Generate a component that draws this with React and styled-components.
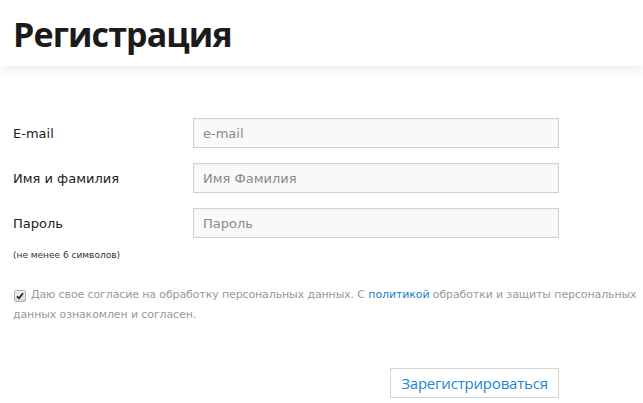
import styled, { createGlobalStyle } from 'styled-components'

const GlobalStyle = createGlobalStyle`
  html, body {
    margin: 0;
    padding: 0;
    background: #ffffff;
  }
  body {
    font-family: "DejaVu Sans", Verdana, sans-serif;
    color: #222;
  }
`

const Header = styled.header`
  height: 66px;
  background: #fff;
  box-shadow: 0 2px 12px rgba(0, 0, 0, 0.09);
  position: relative;
  z-index: 1;
`

const Title = styled.h1`
  margin: 0;
  padding: 11px 0 0 13px;
  font-family: "Open Sans", "Noto Sans", sans-serif;
  font-weight: 700;
  font-size: 34px;
  line-height: 46px;
  color: #1b1b1b;
  letter-spacing: -0.9px;
`

const Form = styled.form`
  padding: 52px 0 0 13px;
`

const Row = styled.div`
  display: flex;
  align-items: center;
  height: 30px;
  margin-bottom: 15px;
`

const Label = styled.label`
  width: 180px;
  font-size: 13px;
  color: #222;
`

const Input = styled.input`
  box-sizing: border-box;
  width: 366px;
  height: 30px;
  padding: 0 9px;
  border: 1px solid #d0d0d0;
  background: #f9f9f9;
  box-shadow: inset 0 1px 2px rgba(0, 0, 0, 0.04);
  font-family: "DejaVu Sans", Verdana, sans-serif;
  font-size: 13px;
  color: #333;
  outline: none;
  &::placeholder {
    color: #8a8a8a;
  }
`

const Hint = styled.div`
  margin-top: -3px;
  font-size: 9px;
  color: #333;
`

const Agreement = styled.div`
  margin-top: 25px;
  font-size: 11px;
  line-height: 20px;
  color: #999;
  letter-spacing: -0.12px;
`

const CheckBox = styled.span`
  display: inline-flex;
  align-items: center;
  justify-content: center;
  box-sizing: border-box;
  width: 12px;
  height: 12px;
  margin: 0 5px 0 1px;
  vertical-align: -2px;
  border: 1px solid #b3b3b3;
  border-radius: 2px;
  background: linear-gradient(#f0f0f0, #d8d8d8);
`

const PolicyLink = styled.a`
  color: #1a7fc2;
  text-decoration: none;
`

const Actions = styled.div`
  display: flex;
  justify-content: flex-start;
  padding-left: 377px;
  margin-top: 43px;
`

const Submit = styled.button`
  box-sizing: border-box;
  width: 169px;
  height: 30px;
  border: 1px solid #d4d4d4;
  background: #fff;
  color: #1e86cf;
  font-family: "Open Sans", "Noto Sans", sans-serif;
  font-size: 15px;
  letter-spacing: -0.2px;
  cursor: pointer;
`

export default function App() {
  return (
    <>
      <GlobalStyle />
      <Header>
        <Title>Регистрация</Title>
      </Header>
      <Form onSubmit={(e) => e.preventDefault()}>
        <Row>
          <Label>E-mail</Label>
          <Input type="email" placeholder="e-mail" />
        </Row>
        <Row>
          <Label>Имя и фамилия</Label>
          <Input type="text" placeholder="Имя Фамилия" />
        </Row>
        <Row>
          <Label>Пароль</Label>
          <Input type="password" placeholder="Пароль" />
        </Row>
        <Hint>(не менее 6 символов)</Hint>
        <Agreement>
          <CheckBox role="checkbox" aria-checked="true">
            <svg width="8" height="8" viewBox="0 0 8 8">
              <path d="M1 4.3 L3 6.3 L7 1.2" fill="none" stroke="#222" strokeWidth="1.7" />
            </svg>
          </CheckBox>
          Даю свое согласие на обработку персональных данных. С{' '}
          <PolicyLink href="#">политикой</PolicyLink> обработки и защиты персональных
          данных ознакомлен и согласен.
        </Agreement>
        <Actions>
          <Submit type="submit">Зарегистрироваться</Submit>
        </Actions>
      </Form>
    </>
  )
}
